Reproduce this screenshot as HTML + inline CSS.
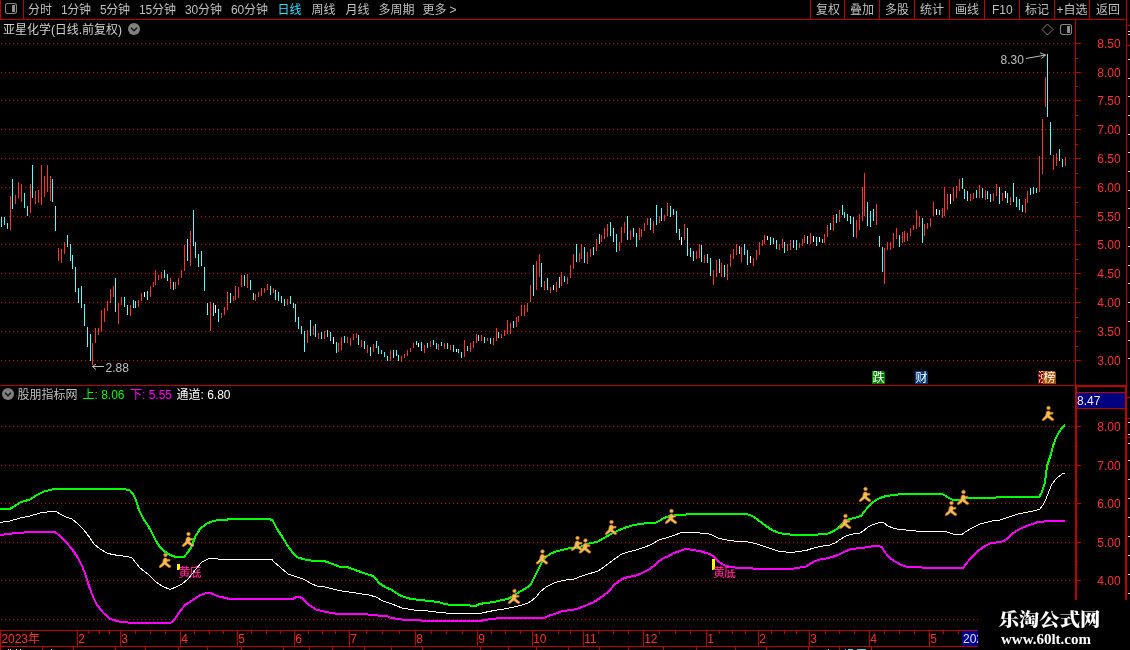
<!DOCTYPE html>
<html lang="zh-CN"><head><meta charset="utf-8"><title>亚星化学 日线</title>
<style>
html,body{margin:0;padding:0;background:#000;overflow:hidden}
svg{display:block;will-change:transform;font-family:"Liberation Sans","Noto Sans CJK SC",sans-serif;shape-rendering:crispEdges}
text{white-space:pre}
</style></head><body>
<svg width="1130" height="650" viewBox="0 0 1130 650">
<rect width="1130" height="650" fill="#000"/>
<g stroke="#c00000" stroke-width="1" stroke-dasharray="1 3">
<line x1="1" y1="43.5" x2="1074" y2="43.5"/>
<line x1="1" y1="72.5" x2="1074" y2="72.5"/>
<line x1="1" y1="100.5" x2="1074" y2="100.5"/>
<line x1="1" y1="129.5" x2="1074" y2="129.5"/>
<line x1="1" y1="158.5" x2="1074" y2="158.5"/>
<line x1="1" y1="187.5" x2="1074" y2="187.5"/>
<line x1="1" y1="216.5" x2="1074" y2="216.5"/>
<line x1="1" y1="244.5" x2="1074" y2="244.5"/>
<line x1="1" y1="273.5" x2="1074" y2="273.5"/>
<line x1="1" y1="302.5" x2="1074" y2="302.5"/>
<line x1="1" y1="331.5" x2="1074" y2="331.5"/>
<line x1="1" y1="360.5" x2="1074" y2="360.5"/>
<line x1="1" y1="426.5" x2="1074" y2="426.5"/>
<line x1="1" y1="465.5" x2="1074" y2="465.5"/>
<line x1="1" y1="503.5" x2="1074" y2="503.5"/>
<line x1="1" y1="542.5" x2="1074" y2="542.5"/>
<line x1="1" y1="580.5" x2="1074" y2="580.5"/>
<line x1="1" y1="619.5" x2="978" y2="619.5"/>
</g>
<path fill="#ff3232" d="M10 196v34h1v-34zM15 195v9h1v-9zM18 182v16h1v-16zM21 184v18h1v-18zM30 184v29h1v-29zM35 191v13h1v-13zM38 190v13h1v-13zM41 165v40h1v-40zM44 176v21h1v-21zM47 165v27h1v-27zM50 176v25h1v-25zM58 248v13h1v-13zM61 249v14h1v-14zM64 242v12h1v-12zM92 343v22h1v-22zM95 328v15h1v-15zM98 328v7h1v-7zM101 310v22h1v-22zM104 308v14h1v-14zM107 301v10h1v-10zM110 289v14h1v-14zM113 286v11h1v-11zM118 303v21h1v-21zM121 297v8h1v-8zM130 305v11h1v-11zM138 300v7h1v-7zM141 293v8h1v-8zM150 286v11h1v-11zM153 282v5h1v-5zM155 270v15h1v-15zM158 275v5h1v-5zM161 272v7h1v-7zM170 278v11h1v-11zM175 282v7h1v-7zM178 278v7h1v-7zM181 270v8h1v-8zM184 245v26h1v-26zM190 231v35h1v-35zM210 302v29h1v-29zM221 313v5h1v-5zM224 307v8h1v-8zM227 292v18h1v-18zM233 296v5h1v-5zM235 286v14h1v-14zM238 287v11h1v-11zM241 275v12h1v-12zM247 274v14h1v-14zM255 294v7h1v-7zM258 292v5h1v-5zM261 288v8h1v-8zM264 288v5h1v-5zM267 284v6h1v-6zM273 288v5h1v-5zM287 299v6h1v-6zM307 330v13h1v-13zM313 326v9h1v-9zM318 333v6h1v-6zM324 331v8h1v-8zM338 343v9h1v-9zM341 337v13h1v-13zM347 337v6h1v-6zM350 338v8h1v-8zM353 334v6h1v-6zM356 333v5h1v-5zM361 340v7h1v-7zM367 345v8h1v-8zM373 344v8h1v-8zM390 350v11h1v-11zM401 356v6h1v-6zM404 354v4h1v-4zM407 350v6h1v-6zM410 348v4h1v-4zM413 343v5h1v-5zM424 345v8h1v-8zM430 341v6h1v-6zM438 344v6h1v-6zM444 343v6h1v-6zM450 345v5h1v-5zM464 340v17h1v-17zM470 343v9h1v-9zM473 341v7h1v-7zM476 334v9h1v-9zM481 335v6h1v-6zM487 338v3h1v-3zM493 338v7h1v-7zM496 328v13h1v-13zM501 334v4h1v-4zM504 330v6h1v-6zM507 320v14h1v-14zM510 323v11h1v-11zM516 317v10h1v-10zM518 316v6h1v-6zM521 305v11h1v-11zM524 305v11h1v-11zM527 303v9h1v-9zM530 285v17h1v-17zM536 261v29h1v-29zM539 254v23h1v-23zM544 281v9h1v-9zM550 287v6h1v-6zM556 282v10h1v-10zM561 272v14h1v-14zM567 277v7h1v-7zM570 265v13h1v-13zM573 254v15h1v-15zM579 253v9h1v-9zM581 244v15h1v-15zM587 252v12h1v-12zM590 249v8h1v-8zM596 239v12h1v-12zM601 235v7h1v-7zM604 228v11h1v-11zM607 224v13h1v-13zM619 242v9h1v-9zM621 227v16h1v-16zM624 222v11h1v-11zM630 230v10h1v-10zM639 228v12h1v-12zM641 229v8h1v-8zM644 223v8h1v-8zM647 218v7h1v-7zM653 221v12h1v-12zM659 216v7h1v-7zM664 215v6h1v-6zM667 203v13h1v-13zM684 224v16h1v-16zM696 251v8h1v-8zM699 244v14h1v-14zM704 255v8h1v-8zM713 270v15h1v-15zM716 260v17h1v-17zM721 263v14h1v-14zM727 264v16h1v-16zM730 254v13h1v-13zM733 249v10h1v-10zM736 244v11h1v-11zM741 247v15h1v-15zM753 258v8h1v-8zM756 250v10h1v-10zM759 242v13h1v-13zM762 240v6h1v-6zM764 235v9h1v-9zM779 244v6h1v-6zM782 239v9h1v-9zM787 244v7h1v-7zM790 240v10h1v-10zM799 243v5h1v-5zM802 239v7h1v-7zM804 235v8h1v-8zM810 233v11h1v-11zM824 234v9h1v-9zM827 225v12h1v-12zM833 215v16h1v-16zM839 210v12h1v-12zM856 220v18h1v-18zM859 214v16h1v-16zM862 187v34h1v-34zM864 173v43h1v-43zM876 204v21h1v-21zM884 248v36h1v-36zM887 242v8h1v-8zM890 242v8h1v-8zM893 233v15h1v-15zM896 228v11h1v-11zM902 232v11h1v-11zM904 231v11h1v-11zM907 233v8h1v-8zM910 228v8h1v-8zM913 225v5h1v-5zM916 210v19h1v-19zM919 216v11h1v-11zM924 224v12h1v-12zM927 223v6h1v-6zM930 218v9h1v-9zM933 202v14h1v-14zM942 208v10h1v-10zM944 187v29h1v-29zM947 194v16h1v-16zM953 187v14h1v-14zM956 186v12h1v-12zM959 179v12h1v-12zM970 194v7h1v-7zM973 193v6h1v-6zM979 185v13h1v-13zM985 190v10h1v-10zM993 193v8h1v-8zM996 184v12h1v-12zM1002 193v8h1v-8zM1010 197v8h1v-8zM1025 199v14h1v-14zM1027 191v12h1v-12zM1039 156v36h1v-36zM1042 119v55h1v-55zM1045 77v30h1v-30zM1053 155v15h1v-15zM1056 153v13h1v-13zM1065 157v9h1v-9z"/>
<path fill="#54ffff" d="M1 217v10h1v-10zM4 217v8h1v-8zM7 223v6h1v-6zM12 179v30h1v-30zM24 193v15h1v-15zM27 206v10h1v-10zM32 165v33h1v-33zM52 179v23h1v-23zM55 206v25h1v-25zM67 235v12h1v-12zM70 244v17h1v-17zM72 255v14h1v-14zM75 267v25h1v-25zM78 288v15h1v-15zM81 286v22h1v-22zM84 304v22h1v-22zM87 327v20h1v-20zM90 334v27h1v-27zM115 278v34h1v-34zM124 297v10h1v-10zM127 305v10h1v-10zM133 300v8h1v-8zM135 301v7h1v-7zM147 291v9h1v-9zM164 270v8h1v-8zM167 274v7h1v-7zM173 282v8h1v-8zM187 239v22h1v-22zM193 210v36h1v-36zM195 242v16h1v-16zM198 254v13h1v-13zM201 251v15h1v-15zM204 267v24h1v-24zM207 303v12h1v-12zM213 303v13h1v-13zM218 309v13h1v-13zM230 293v10h1v-10zM244 275v11h1v-11zM250 280v10h1v-10zM253 293v7h1v-7zM270 286v9h1v-9zM275 290v10h1v-10zM278 292v9h1v-9zM281 296v7h1v-7zM284 299v7h1v-7zM290 296v8h1v-8zM293 303v5h1v-5zM295 304v18h1v-18zM298 317v12h1v-12zM301 326v8h1v-8zM304 331v21h1v-21zM310 320v16h1v-16zM315 324v13h1v-13zM321 332v7h1v-7zM327 330v7h1v-7zM330 332v9h1v-9zM336 342v11h1v-11zM344 336v7h1v-7zM358 335v10h1v-10zM364 341v8h1v-8zM370 347v9h1v-9zM376 341v7h1v-7zM378 346v8h1v-8zM381 350v4h1v-4zM384 352v5h1v-5zM387 356v5h1v-5zM393 350v8h1v-8zM396 350v6h1v-6zM398 355v6h1v-6zM416 341v4h1v-4zM421 342v9h1v-9zM427 343v5h1v-5zM433 340v5h1v-5zM436 343v6h1v-6zM441 342v4h1v-4zM447 343v6h1v-6zM453 345v7h1v-7zM458 349v4h1v-4zM461 352v6h1v-6zM467 346v5h1v-5zM478 335v6h1v-6zM484 337v6h1v-6zM490 338v6h1v-6zM498 332v6h1v-6zM513 321v7h1v-7zM533 265v31h1v-31zM541 263v24h1v-24zM547 278v12h1v-12zM559 277v11h1v-11zM564 276v6h1v-6zM576 244v18h1v-18zM584 247v16h1v-16zM593 247v8h1v-8zM599 234v10h1v-10zM610 222v14h1v-14zM613 228v14h1v-14zM616 234v18h1v-18zM627 216v24h1v-24zM633 228v9h1v-9zM636 233v14h1v-14zM650 218v12h1v-12zM656 205v20h1v-20zM661 208v13h1v-13zM670 206v11h1v-11zM673 209v6h1v-6zM676 211v22h1v-22zM679 229v11h1v-11zM687 228v28h1v-28zM690 248v9h1v-9zM693 251v10h1v-10zM701 245v17h1v-17zM707 254v9h1v-9zM710 258v18h1v-18zM719 259v14h1v-14zM724 265v12h1v-12zM739 246v8h1v-8zM744 244v11h1v-11zM747 250v15h1v-15zM770 237v8h1v-8zM773 238v6h1v-6zM776 240v9h1v-9zM784 242v11h1v-11zM793 240v8h1v-8zM796 240v10h1v-10zM807 236v8h1v-8zM816 237v9h1v-9zM822 239v4h1v-4zM830 223v7h1v-7zM836 214v9h1v-9zM842 205v10h1v-10zM844 212v6h1v-6zM847 214v7h1v-7zM850 216v8h1v-8zM853 217v20h1v-20zM867 202v24h1v-24zM870 211v16h1v-16zM873 209v12h1v-12zM879 236v11h1v-11zM882 247v25h1v-25zM899 235v12h1v-12zM922 218v25h1v-25zM939 210v5h1v-5zM962 178v11h1v-11zM964 189v10h1v-10zM967 191v10h1v-10zM976 190v8h1v-8zM982 188v10h1v-10zM987 191v8h1v-8zM990 194v8h1v-8zM999 187v17h1v-17zM1007 193v10h1v-10zM1013 183v19h1v-19zM1016 197v10h1v-10zM1019 199v11h1v-11zM1022 205v7h1v-7zM1030 188v7h1v-7zM1033 187v7h1v-7zM1036 188v5h1v-5zM1047 54v63h1v-63zM1050 122v33h1v-33zM1059 149v12h1v-12zM1062 159v8h1v-8z"/>
<path fill="#ffffff" d="M144 292v5h1v-5zM215 305v8h1v-8zM333 337v7h1v-7zM418 343v4h1v-4zM456 349v3h1v-3zM553 285v5h1v-5zM681 237v8h1v-8zM750 256v7h1v-7zM767 236v4h1v-4zM813 236v6h1v-6zM819 237v5h1v-5zM936 209v6h1v-6zM950 194v10h1v-10zM1005 191v7h1v-7z"/>
<text x="1000.5" y="64" fill="#c0c0c0" font-size="12">8.30</text>
<path d="M1026 58.5L1045.5 55M1040 52.8L1045.5 55L1041.5 58.5" stroke="#c0c0c0" stroke-width="1" fill="none" shape-rendering="auto"/>
<text x="105.5" y="372" fill="#c0c0c0" font-size="12">2.88</text>
<path d="M104 366.5H92.5M96 364L92.5 366.5L96 369.5" stroke="#c0c0c0" stroke-width="1" fill="none" shape-rendering="auto"/>
<path d="M872 371h11l2 2v11h-13z" fill="#008000"/>
<text x="872.5" y="382" fill="#ffffff" font-size="12">跌</text>
<path d="M915 371h11l2 2v11h-13z" fill="#003878"/>
<text x="915.5" y="382" fill="#ffffff" font-size="12">财</text>
<rect x="1038" y="371" width="6" height="13" fill="#800000"/>
<clipPath id="cz"><rect x="1038" y="371" width="5" height="13"/></clipPath>
<text x="1038" y="382" fill="#ffffff" font-size="12" clip-path="url(#cz)">涨</text>
<path d="M1043 371h11l2 2v11h-13z" fill="#a05000"/>
<text x="1043.5" y="382" fill="#ffffff" font-size="12">榜</text>
<rect x="0" y="19" width="1127" height="1" fill="#c00000"/>
<rect x="0" y="0" width="1" height="20" fill="#c00000"/>
<rect x="23" y="0" width="1" height="20" fill="#c00000"/>
<rect x="810" y="0" width="1" height="20" fill="#c00000"/>
<rect x="844" y="0" width="1" height="20" fill="#c00000"/>
<rect x="879" y="0" width="1" height="20" fill="#c00000"/>
<rect x="914" y="0" width="1" height="20" fill="#c00000"/>
<rect x="949" y="0" width="1" height="20" fill="#c00000"/>
<rect x="984" y="0" width="1" height="20" fill="#c00000"/>
<rect x="1019" y="0" width="1" height="20" fill="#c00000"/>
<rect x="1054" y="0" width="1" height="20" fill="#c00000"/>
<rect x="1089" y="0" width="1" height="20" fill="#c00000"/>
<rect x="5.5" y="3.5" width="11" height="10" rx="2.2" ry="2.2" fill="none" stroke="#868686" stroke-width="1.1" shape-rendering="auto"/>
<rect x="12" y="5" width="3" height="7" fill="#909090"/>
<rect x="1060.5" y="24.5" width="11" height="10" rx="2.2" ry="2.2" fill="none" stroke="#868686" stroke-width="1.1" shape-rendering="auto"/>
<rect x="1067" y="26" width="3" height="7" fill="#909090"/>
<path d="M1047.5 24L1053 29.5L1047.5 35L1042 29.5Z" fill="none" stroke="#808080" stroke-width="1" shape-rendering="auto"/>
<text x="28" y="14" fill="#c0c0c0" font-size="12" textLength="24" lengthAdjust="spacing">分时</text>
<text x="61" y="14" fill="#c0c0c0" font-size="12" textLength="30" lengthAdjust="spacing">1分钟</text>
<text x="100" y="14" fill="#c0c0c0" font-size="12" textLength="30" lengthAdjust="spacing">5分钟</text>
<text x="139" y="14" fill="#c0c0c0" font-size="12" textLength="37" lengthAdjust="spacing">15分钟</text>
<text x="185" y="14" fill="#c0c0c0" font-size="12" textLength="37" lengthAdjust="spacing">30分钟</text>
<text x="231" y="14" fill="#c0c0c0" font-size="12" textLength="37" lengthAdjust="spacing">60分钟</text>
<text x="277.5" y="14" fill="#30e0ff" font-size="12" textLength="24" lengthAdjust="spacing">日线</text>
<text x="311.5" y="14" fill="#c0c0c0" font-size="12" textLength="24" lengthAdjust="spacing">周线</text>
<text x="345.5" y="14" fill="#c0c0c0" font-size="12" textLength="24" lengthAdjust="spacing">月线</text>
<text x="378.5" y="14" fill="#c0c0c0" font-size="12" textLength="36" lengthAdjust="spacing">多周期</text>
<text x="422.5" y="14" fill="#c0c0c0" font-size="12" textLength="24" lengthAdjust="spacing">更多</text>
<text x="449.5" y="14" fill="#c0c0c0" font-size="12">&gt;</text>
<text x="816" y="14" fill="#c0c0c0" font-size="12" textLength="24" lengthAdjust="spacing">复权</text>
<text x="850" y="14" fill="#c0c0c0" font-size="12" textLength="24" lengthAdjust="spacing">叠加</text>
<text x="885" y="14" fill="#c0c0c0" font-size="12" textLength="24" lengthAdjust="spacing">多股</text>
<text x="920" y="14" fill="#c0c0c0" font-size="12" textLength="24" lengthAdjust="spacing">统计</text>
<text x="955" y="14" fill="#c0c0c0" font-size="12" textLength="24" lengthAdjust="spacing">画线</text>
<text x="992" y="14" fill="#c0c0c0" font-size="12">F10</text>
<text x="1025" y="14" fill="#c0c0c0" font-size="12" textLength="24" lengthAdjust="spacing">标记</text>
<text x="1056.5" y="14" fill="#c0c0c0" font-size="12" textLength="31" lengthAdjust="spacing">+自选</text>
<text x="1096" y="14" fill="#c0c0c0" font-size="12" textLength="24" lengthAdjust="spacing">返回</text>
<text x="3" y="34" fill="#d0d0d0" font-size="12" textLength="119" lengthAdjust="spacing">亚星化学(日线.前复权)</text>
<circle cx="134" cy="29" r="6" fill="#808080" shape-rendering="auto"/>
<path d="M131 27.8L134 30.8L137 27.8" fill="none" stroke="#101010" stroke-width="1.3" shape-rendering="auto"/>
<rect x="1075" y="19" width="1" height="367" fill="#c00000"/>
<rect x="1075" y="385" width="2" height="215" fill="#c00000"/>
<rect x="1126" y="0" width="1" height="386" fill="#c00000"/>
<rect x="1125" y="385" width="2" height="265" fill="#c00000"/>
<rect x="0" y="385" width="1076" height="1" fill="#c00000"/>
<rect x="1075" y="385" width="52" height="2" fill="#c00000"/>
<rect x="1076" y="43" width="5" height="1" fill="#c00000"/>
<text x="1120.7" y="48" fill="#ff3232" font-size="12" text-anchor="end">8.50</text>
<rect x="1076" y="72" width="5" height="1" fill="#c00000"/>
<text x="1120.7" y="77" fill="#ff3232" font-size="12" text-anchor="end">8.00</text>
<rect x="1076" y="100" width="5" height="1" fill="#c00000"/>
<text x="1120.7" y="105" fill="#ff3232" font-size="12" text-anchor="end">7.50</text>
<rect x="1076" y="129" width="5" height="1" fill="#c00000"/>
<text x="1120.7" y="134" fill="#ff3232" font-size="12" text-anchor="end">7.00</text>
<rect x="1076" y="158" width="5" height="1" fill="#c00000"/>
<text x="1120.7" y="163" fill="#ff3232" font-size="12" text-anchor="end">6.50</text>
<rect x="1076" y="187" width="5" height="1" fill="#c00000"/>
<text x="1120.7" y="192" fill="#ff3232" font-size="12" text-anchor="end">6.00</text>
<rect x="1076" y="216" width="5" height="1" fill="#c00000"/>
<text x="1120.7" y="221" fill="#ff3232" font-size="12" text-anchor="end">5.50</text>
<rect x="1076" y="244" width="5" height="1" fill="#c00000"/>
<text x="1120.7" y="249" fill="#ff3232" font-size="12" text-anchor="end">5.00</text>
<rect x="1076" y="273" width="5" height="1" fill="#c00000"/>
<text x="1120.7" y="278" fill="#ff3232" font-size="12" text-anchor="end">4.50</text>
<rect x="1076" y="302" width="5" height="1" fill="#c00000"/>
<text x="1120.7" y="307" fill="#ff3232" font-size="12" text-anchor="end">4.00</text>
<rect x="1076" y="331" width="5" height="1" fill="#c00000"/>
<text x="1120.7" y="336" fill="#ff3232" font-size="12" text-anchor="end">3.50</text>
<rect x="1076" y="360" width="5" height="1" fill="#c00000"/>
<text x="1120.7" y="365" fill="#ff3232" font-size="12" text-anchor="end">3.00</text>
<rect x="1076" y="58" width="2" height="1" fill="#c00000"/>
<rect x="1076" y="86" width="2" height="1" fill="#c00000"/>
<rect x="1076" y="115" width="2" height="1" fill="#c00000"/>
<rect x="1076" y="144" width="2" height="1" fill="#c00000"/>
<rect x="1076" y="173" width="2" height="1" fill="#c00000"/>
<rect x="1076" y="202" width="2" height="1" fill="#c00000"/>
<rect x="1076" y="230" width="2" height="1" fill="#c00000"/>
<rect x="1076" y="259" width="2" height="1" fill="#c00000"/>
<rect x="1076" y="288" width="2" height="1" fill="#c00000"/>
<rect x="1076" y="317" width="2" height="1" fill="#c00000"/>
<rect x="1076" y="346" width="2" height="1" fill="#c00000"/>
<rect x="1077" y="426" width="4" height="1" fill="#c00000"/>
<text x="1120.7" y="431" fill="#ff3232" font-size="12" text-anchor="end">8.00</text>
<rect x="1077" y="465" width="4" height="1" fill="#c00000"/>
<text x="1120.7" y="470" fill="#ff3232" font-size="12" text-anchor="end">7.00</text>
<rect x="1077" y="503" width="4" height="1" fill="#c00000"/>
<text x="1120.7" y="508" fill="#ff3232" font-size="12" text-anchor="end">6.00</text>
<rect x="1077" y="542" width="4" height="1" fill="#c00000"/>
<text x="1120.7" y="547" fill="#ff3232" font-size="12" text-anchor="end">5.00</text>
<rect x="1077" y="580" width="4" height="1" fill="#c00000"/>
<text x="1120.7" y="585" fill="#ff3232" font-size="12" text-anchor="end">4.00</text>
<rect x="1077" y="446" width="1" height="1" fill="#c00000"/>
<rect x="1077" y="484" width="1" height="1" fill="#c00000"/>
<rect x="1077" y="523" width="1" height="1" fill="#c00000"/>
<rect x="1077" y="561" width="1" height="1" fill="#c00000"/>
<rect x="1077" y="393" width="48" height="15" fill="#000080"/>
<rect x="1077" y="392" width="48" height="1" fill="#c00000"/>
<rect x="1077" y="408" width="48" height="1" fill="#c00000"/>
<text x="1077" y="404.5" fill="#f0f0e0" font-size="12">8.47</text>
<circle cx="8" cy="394" r="6" fill="#808080" shape-rendering="auto"/>
<path d="M5 392.8L8 395.8L11 392.8" fill="none" stroke="#101010" stroke-width="1.3" shape-rendering="auto"/>
<text x="17.5" y="398.5" fill="#c0c0c0" font-size="12" textLength="60" lengthAdjust="spacing">股朋指标网</text>
<text x="82.5" y="398.5" fill="#00ff00" font-size="12">上: 8.06</text>
<text x="130" y="398.5" fill="#ff00ff" font-size="12">下: 5.55</text>
<text x="176.5" y="398.5" fill="#ffffff" font-size="12">通道: 6.80</text>
<rect x="177" y="564" width="3" height="6" fill="#ffff00"/>
<text x="178.5" y="577" fill="#ff2090" font-size="12" textLength="23" lengthAdjust="spacing" font-weight="500">黄底</text>
<rect x="712" y="559" width="3" height="11" fill="#ffff00"/>
<text x="713" y="577" fill="#ff2090" font-size="12" textLength="23" lengthAdjust="spacing" font-weight="500">黄底</text>
<polyline points="0,535 12,533.5 24,532.5 55,532 60,536 66,542 72,549 78,558 82,566 86,576 89,586 92,594 94,599 96.5,604 103,612.5 110,619 119,621.5 128,622.5 171,622.5 175,619 179,612.5 185,605 193,600 200,595 209,592.5 215,595 220,597 227,598 228,599 293,599 296,597 300,597 303,599 308,604 316,609.5 322,611 331,613 339,614 367,614 369,615 377,615 379,616 387,616 391,618 399,619 405,620 420,620 422,621 481,621 484,620 496,618.5 500,618 544,618 548,616 556,613.5 562,611 572,610 578,608.5 586,605.5 594,602 600,598 606,593.5 610,590 614,585 618,582 622,579 628,577 636,575.5 642,573 650,569 656,564 660,560.5 664,558 668,556.5 674,553 680,551 684,549.5 688,549 692,550 700,551 706,553 710,554 714,557 718,561 722,564 726,566 732,567 738,568 752,568 754,569 792,569 796,568 800,567.5 806,566.5 810,564 814,561.5 820,559.5 826,558.5 832,557 838,555 844,552 850,549.5 856,548.5 862,548 868,547 874,546 878,546 882,547 884,551 888,556 892,559.5 896,562 900,564.5 906,566.5 912,567 922,567.5 924,568 963,568 966,564 970,559 974,555 978,551 982,548 986,545.5 990,543.5 996,542.5 1000,542 1004,541 1008,538 1012,534 1016,531 1022,528 1028,525.5 1034,523.5 1038,522 1044,521.5 1048,521 1065,521" fill="none" stroke="#ff00ff" stroke-width="2" stroke-linejoin="round"/>
<polyline points="0,522.5 10,521 20,518 30,516 40,513 50,511.5 56,511.5 60,514 66,517 72,519 78,524 84,530 90,538 94,544 100,549 108,553.5 118,555.5 128,556.5 132,558 136,563 140,568 148,574 156,582 162,586 170,589.5 176,587 182,584 188,579 196,569 202,562 208,559 214,558 220,559.5 272,559.5 274,562 280,567 288,574 296,576.5 304,579.5 311,583.5 317,586 325,587 331,588.5 339,590.5 349,592 359,593.5 369,595 376,597 383,601 392,604 402,608 414,610 424,610.5 436,612 440,612.5 452,613.5 480,613.5 484,612.5 494,610.5 504,609 514,607 522,605 528,603 532,600.5 536,597 540,592 546,587 552,584 558,581.5 566,580 574,579 582,576 590,573.5 598,571 604,567 610,562.5 616,558 621,554.5 628,552 636,550 644,547.5 652,544 658,540.5 663,538.5 666,538 674,535.5 680,533 686,532.5 696,532.5 700,533 708,533.5 712,535 718,538 724,539.5 734,541 748,542 756,543.5 764,546.5 772,549 778,551 786,552 792,552.5 798,551.5 806,550.5 812,548.5 820,546.5 830,545 836,542.5 840,539.5 844,537 850,534.5 860,533 864,530.5 868,527 872,525 876,523.5 880,522.5 884,523 888,526 894,528.5 900,529.5 906,530 916,531 930,531.5 946,531.5 950,533 954,534.5 962,534.5 966,531.5 972,528 980,524 986,522.5 992,521 1000,520 1006,518 1012,516 1020,513.5 1028,512 1036,510.5 1040,509 1043,505 1046,499 1049,491 1052,484 1056,479 1060,475.5 1063,473.5 1065,473" fill="none" stroke="#ffffff" stroke-width="1" stroke-linejoin="round"/>
<polyline points="0,509 10,509 14,506.5 20,502.5 30,499.5 36,495.5 44,491.5 52,489.5 62,489 124,489 130,490.5 133,494 136,500 139,510 143,518 150,529 156,541 160,547 164,551 170,555 176,557 184,557 188,552 192,546 195,537 200,529 206,524 212,521.5 218,520 227,520 228,519 270,519 273,521 277,529 283,538 289,548 294,554 298,557.5 305,559.5 311,560.5 324,561 330,563 339,566.5 347,567 354,569.5 362,572.5 373,576 376,579 379,583 385,587 392,590 399,595 406,597.5 411,599 420,600 434,601.5 440,602.5 444,604 452,605 470,605.5 473,606.5 476,606 479,604 486,603 494,602 500,600.5 505,599.5 508,599 516,594 521,591 527,587.5 531,584 534,578 538,570 542,562 546,557 550,554 556,551.5 562,550 568,548.5 578,548 586,544 592,543 598,541.5 604,538 610,534.5 616,531.5 624,528 632,525.5 640,524 648,523 656,522.5 660,520.5 664,518 670,516 678,515 686,514.5 690,514 746,514 750,515 754,517 760,521.5 766,526 772,530 778,532.5 784,534 790,534.5 818,534.5 822,534 828,533.5 832,532 836,529.5 840,526 844,522 848,519.5 852,518.5 856,517.5 861,516 864,512 868,507 872,503 876,500 880,498 886,496 894,495 902,494 904,493.5 940,493.5 944,495 948,497.5 952,499.5 956,500 960,500 966,498.5 970,497.5 996,497.5 998,497 1039,497 1041,494 1043,489 1045,482 1046,474 1047,466 1049,460 1051,454 1053,446 1056,438 1059,432 1062,428 1065,424.5" fill="none" stroke="#00ff00" stroke-width="2" stroke-linejoin="round"/>
<defs><g id="pm"><circle cx="6.5" cy="2.0" r="1.8"/><path d="M5.2 5.1L7.4 5.1L8.2 6.3L11 6.3L11 8L8.3 8.3L7.8 9.8L12 13.2L11.2 14.6L9.8 14.6L5.7 11.6L1.8 14.6L0.4 14.6L0.2 13.2L3.6 9.8L4.2 6.5Z"/></g></defs>
<use href="#pm" x="159" y="553" fill="#f6bc58" stroke="#c07018" stroke-width="0.7" shape-rendering="auto"/>
<use href="#pm" x="182" y="532" fill="#f6bc58" stroke="#c07018" stroke-width="0.7" shape-rendering="auto"/>
<use href="#pm" x="508" y="589" fill="#f6bc58" stroke="#c07018" stroke-width="0.7" shape-rendering="auto"/>
<use href="#pm" x="536" y="549.5" fill="#f6bc58" stroke="#c07018" stroke-width="0.7" shape-rendering="auto"/>
<use href="#pm" x="571" y="536" fill="#f6bc58" stroke="#c07018" stroke-width="0.7" shape-rendering="auto"/>
<use href="#pm" x="579" y="538.5" fill="#f6bc58" stroke="#c07018" stroke-width="0.7" shape-rendering="auto"/>
<use href="#pm" x="605" y="520" fill="#f6bc58" stroke="#c07018" stroke-width="0.7" shape-rendering="auto"/>
<use href="#pm" x="665" y="509" fill="#f6bc58" stroke="#c07018" stroke-width="0.7" shape-rendering="auto"/>
<use href="#pm" x="839" y="514" fill="#f6bc58" stroke="#c07018" stroke-width="0.7" shape-rendering="auto"/>
<use href="#pm" x="859" y="487" fill="#f6bc58" stroke="#c07018" stroke-width="0.7" shape-rendering="auto"/>
<use href="#pm" x="945" y="501" fill="#f6bc58" stroke="#c07018" stroke-width="0.7" shape-rendering="auto"/>
<use href="#pm" x="957" y="490" fill="#f6bc58" stroke="#c07018" stroke-width="0.7" shape-rendering="auto"/>
<use href="#pm" x="1042" y="406" fill="#f6bc58" stroke="#c07018" stroke-width="0.7" shape-rendering="auto"/>
<rect x="0" y="630" width="978" height="1" fill="#c00000"/>
<rect x="0" y="646" width="978" height="1" fill="#c00000"/>
<rect x="0" y="630" width="1" height="20" fill="#c00000"/>
<text x="1.5" y="643" fill="#ff3232" font-size="12" textLength="38.5" lengthAdjust="spacing">2023年</text>
<rect x="77" y="630" width="1" height="17" fill="#c00000"/>
<text x="78.2" y="643" fill="#ff3232" font-size="12">2</text>
<rect x="120" y="630" width="1" height="17" fill="#c00000"/>
<text x="121.2" y="643" fill="#ff3232" font-size="12">3</text>
<rect x="180" y="630" width="1" height="17" fill="#c00000"/>
<text x="181.2" y="643" fill="#ff3232" font-size="12">4</text>
<rect x="237" y="630" width="1" height="17" fill="#c00000"/>
<text x="238.2" y="643" fill="#ff3232" font-size="12">5</text>
<rect x="294" y="630" width="1" height="17" fill="#c00000"/>
<text x="295.2" y="643" fill="#ff3232" font-size="12">6</text>
<rect x="349" y="630" width="1" height="17" fill="#c00000"/>
<text x="350.2" y="643" fill="#ff3232" font-size="12">7</text>
<rect x="415" y="630" width="1" height="17" fill="#c00000"/>
<text x="416.2" y="643" fill="#ff3232" font-size="12">8</text>
<rect x="477" y="630" width="1" height="17" fill="#c00000"/>
<text x="478.2" y="643" fill="#ff3232" font-size="12">9</text>
<rect x="532" y="630" width="1" height="17" fill="#c00000"/>
<text x="533.2" y="643" fill="#ff3232" font-size="12">10</text>
<rect x="583" y="630" width="1" height="17" fill="#c00000"/>
<text x="584.2" y="643" fill="#ff3232" font-size="12">11</text>
<rect x="643" y="630" width="1" height="17" fill="#c00000"/>
<text x="644.2" y="643" fill="#ff3232" font-size="12">12</text>
<rect x="706" y="630" width="1" height="17" fill="#c00000"/>
<text x="707.2" y="643" fill="#ff3232" font-size="12">1</text>
<rect x="758" y="630" width="1" height="17" fill="#c00000"/>
<text x="759.2" y="643" fill="#ff3232" font-size="12">2</text>
<rect x="809" y="630" width="1" height="17" fill="#c00000"/>
<text x="810.2" y="643" fill="#ff3232" font-size="12">3</text>
<rect x="869" y="630" width="1" height="17" fill="#c00000"/>
<text x="870.2" y="643" fill="#ff3232" font-size="12">4</text>
<rect x="929" y="630" width="1" height="17" fill="#c00000"/>
<text x="930.2" y="643" fill="#ff3232" font-size="12">5</text>
<rect x="88" y="630" width="1" height="4" fill="#c00000"/>
<rect x="99" y="630" width="1" height="4" fill="#c00000"/>
<rect x="109" y="630" width="1" height="4" fill="#c00000"/>
<rect x="135" y="630" width="1" height="4" fill="#c00000"/>
<rect x="150" y="630" width="1" height="4" fill="#c00000"/>
<rect x="165" y="630" width="1" height="4" fill="#c00000"/>
<rect x="194" y="630" width="1" height="4" fill="#c00000"/>
<rect x="209" y="630" width="1" height="4" fill="#c00000"/>
<rect x="223" y="630" width="1" height="4" fill="#c00000"/>
<rect x="251" y="630" width="1" height="4" fill="#c00000"/>
<rect x="266" y="630" width="1" height="4" fill="#c00000"/>
<rect x="280" y="630" width="1" height="4" fill="#c00000"/>
<rect x="308" y="630" width="1" height="4" fill="#c00000"/>
<rect x="322" y="630" width="1" height="4" fill="#c00000"/>
<rect x="335" y="630" width="1" height="4" fill="#c00000"/>
<rect x="366" y="630" width="1" height="4" fill="#c00000"/>
<rect x="382" y="630" width="1" height="4" fill="#c00000"/>
<rect x="399" y="630" width="1" height="4" fill="#c00000"/>
<rect x="431" y="630" width="1" height="4" fill="#c00000"/>
<rect x="446" y="630" width="1" height="4" fill="#c00000"/>
<rect x="462" y="630" width="1" height="4" fill="#c00000"/>
<rect x="491" y="630" width="1" height="4" fill="#c00000"/>
<rect x="505" y="630" width="1" height="4" fill="#c00000"/>
<rect x="520" y="630" width="1" height="4" fill="#c00000"/>
<rect x="558" y="630" width="1" height="4" fill="#c00000"/>
<rect x="570" y="630" width="1" height="4" fill="#c00000"/>
<rect x="598" y="630" width="1" height="4" fill="#c00000"/>
<rect x="613" y="630" width="1" height="4" fill="#c00000"/>
<rect x="628" y="630" width="1" height="4" fill="#c00000"/>
<rect x="659" y="630" width="1" height="4" fill="#c00000"/>
<rect x="675" y="630" width="1" height="4" fill="#c00000"/>
<rect x="690" y="630" width="1" height="4" fill="#c00000"/>
<rect x="719" y="630" width="1" height="4" fill="#c00000"/>
<rect x="732" y="630" width="1" height="4" fill="#c00000"/>
<rect x="745" y="630" width="1" height="4" fill="#c00000"/>
<rect x="771" y="630" width="1" height="4" fill="#c00000"/>
<rect x="784" y="630" width="1" height="4" fill="#c00000"/>
<rect x="796" y="630" width="1" height="4" fill="#c00000"/>
<rect x="825" y="630" width="1" height="4" fill="#c00000"/>
<rect x="839" y="630" width="1" height="4" fill="#c00000"/>
<rect x="854" y="630" width="1" height="4" fill="#c00000"/>
<rect x="884" y="630" width="1" height="4" fill="#c00000"/>
<rect x="899" y="630" width="1" height="4" fill="#c00000"/>
<rect x="914" y="630" width="1" height="4" fill="#c00000"/>
<rect x="943" y="630" width="1" height="4" fill="#c00000"/>
<rect x="958" y="630" width="1" height="4" fill="#c00000"/>
<rect x="42" y="646" width="1" height="4" fill="#c00000"/>
<rect x="73" y="646" width="1" height="4" fill="#c00000"/>
<rect x="115" y="646" width="1" height="4" fill="#c00000"/>
<rect x="145" y="646" width="1" height="4" fill="#c00000"/>
<rect x="178" y="646" width="1" height="4" fill="#c00000"/>
<rect x="207" y="646" width="1" height="4" fill="#c00000"/>
<rect x="241" y="646" width="1" height="4" fill="#c00000"/>
<rect x="283" y="646" width="1" height="4" fill="#c00000"/>
<rect x="309" y="646" width="1" height="4" fill="#c00000"/>
<rect x="332" y="646" width="1" height="4" fill="#c00000"/>
<rect x="364" y="646" width="1" height="4" fill="#c00000"/>
<rect x="391" y="646" width="1" height="4" fill="#c00000"/>
<rect x="422" y="646" width="1" height="4" fill="#c00000"/>
<rect x="480" y="646" width="1" height="4" fill="#c00000"/>
<rect x="508" y="646" width="1" height="4" fill="#c00000"/>
<rect x="536" y="646" width="1" height="4" fill="#c00000"/>
<rect x="568" y="646" width="1" height="4" fill="#c00000"/>
<rect x="599" y="646" width="1" height="4" fill="#c00000"/>
<rect x="628" y="646" width="1" height="4" fill="#c00000"/>
<rect x="663" y="646" width="1" height="4" fill="#c00000"/>
<rect x="696" y="646" width="1" height="4" fill="#c00000"/>
<rect x="735" y="646" width="1" height="4" fill="#c00000"/>
<rect x="766" y="646" width="1" height="4" fill="#c00000"/>
<rect x="808" y="646" width="1" height="4" fill="#c00000"/>
<rect x="839" y="646" width="1" height="4" fill="#c00000"/>
<rect x="871" y="646" width="1" height="4" fill="#c00000"/>
<rect x="8" y="649" width="1" height="1" fill="#e0e0e0"/>
<rect x="10" y="649" width="1" height="1" fill="#e0e0e0"/>
<rect x="16" y="649" width="1" height="1" fill="#e0e0e0"/>
<rect x="20" y="649" width="1" height="1" fill="#e0e0e0"/>
<rect x="51" y="649" width="1" height="1" fill="#e0e0e0"/>
<rect x="828" y="649" width="1" height="1" fill="#e0e0e0"/>
<rect x="845" y="649" width="1" height="1" fill="#40e0e0"/>
<rect x="848" y="649" width="5" height="1" fill="#40e0e0"/>
<rect x="857" y="649" width="9" height="1" fill="#40e0e0"/>
<rect x="962" y="631" width="16" height="15" fill="#000090"/>
<clipPath id="cd"><rect x="962" y="631" width="16" height="15"/></clipPath>
<text x="963" y="643" fill="#e0e0f0" font-size="12" clip-path="url(#cd)">2024</text>
<rect x="978" y="600" width="152" height="50" fill="#000000"/>
<text x="1049.5" y="625.6" fill="#ffffff" font-size="18.6" font-weight="900" text-anchor="middle" textLength="102" lengthAdjust="spacingAndGlyphs" font-family="'Liberation Serif','Noto Serif CJK SC',serif" shape-rendering="auto">乐淘公式网</text>
<text x="1046" y="644" fill="#ffffff" font-size="15" font-weight="bold" text-anchor="middle" textLength="90" lengthAdjust="spacingAndGlyphs" font-family="'Liberation Serif',serif">www.60lt.com</text>
<rect x="1127" y="25" width="3" height="1" fill="#c00000"/>
<rect x="1127" y="45" width="3" height="1" fill="#c00000"/>
<rect x="1128" y="31" width="2" height="1" fill="#d0d0d0"/>
<rect x="1128" y="34" width="2" height="1" fill="#d0d0d0"/>
<rect x="1128" y="59" width="2" height="1" fill="#d0d0d0"/>
<rect x="1128" y="78" width="2" height="1" fill="#d0d0d0"/>
<rect x="1128" y="96" width="2" height="1" fill="#d0d0d0"/>
<rect x="1128" y="115" width="2" height="1" fill="#d0d0d0"/>
<rect x="1128" y="134" width="2" height="1" fill="#d0d0d0"/>
<rect x="1128" y="152" width="2" height="1" fill="#d0d0d0"/>
<rect x="1128" y="171" width="2" height="1" fill="#d0d0d0"/>
<rect x="1128" y="190" width="2" height="1" fill="#d0d0d0"/>
<rect x="1128" y="208" width="2" height="1" fill="#d0d0d0"/>
<rect x="1128" y="227" width="2" height="1" fill="#d0d0d0"/>
<rect x="1128" y="246" width="2" height="1" fill="#d0d0d0"/>
<rect x="1128" y="265" width="2" height="1" fill="#d0d0d0"/>
<rect x="1128" y="283" width="2" height="1" fill="#d0d0d0"/>
<rect x="1128" y="302" width="2" height="1" fill="#d0d0d0"/>
<rect x="1128" y="321" width="2" height="1" fill="#d0d0d0"/>
<rect x="1128" y="340" width="2" height="1" fill="#d0d0d0"/>
<rect x="1128" y="358" width="2" height="1" fill="#d0d0d0"/>
<rect x="1127" y="397" width="3" height="1" fill="#c00000"/>
<rect x="1127" y="418" width="3" height="1" fill="#c00000"/>
<rect x="1127" y="437" width="3" height="1" fill="#c00000"/>
<rect x="1128" y="422" width="2" height="1" fill="#d0d0d0"/>
<rect x="1128" y="434" width="2" height="1" fill="#d0d0d0"/>
<rect x="1128" y="443" width="2" height="1" fill="#d0d0d0"/>
<rect x="1128" y="460" width="2" height="1" fill="#d0d0d0"/>
<rect x="1128" y="479" width="2" height="1" fill="#d0d0d0"/>
<rect x="1128" y="498" width="2" height="1" fill="#d0d0d0"/>
<rect x="1128" y="517" width="2" height="1" fill="#d0d0d0"/>
<rect x="1128" y="536" width="2" height="1" fill="#d0d0d0"/>
<rect x="1128" y="555" width="2" height="1" fill="#d0d0d0"/>
<rect x="1128" y="574" width="2" height="1" fill="#d0d0d0"/>
<rect x="1128" y="593" width="2" height="1" fill="#d0d0d0"/>
</svg>
</body></html>
